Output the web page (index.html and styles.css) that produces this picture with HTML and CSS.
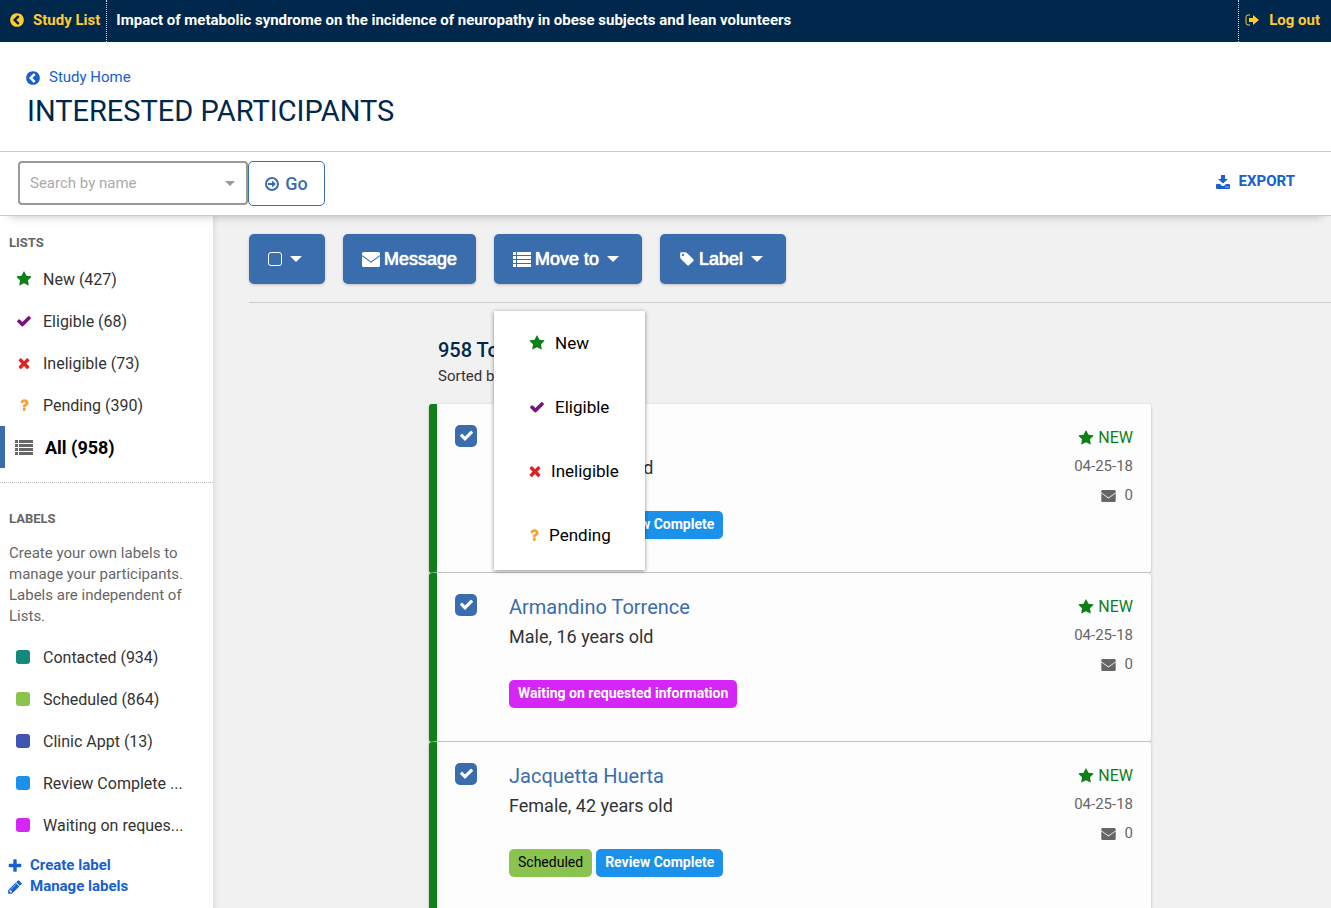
FILE: index.html
```html
<!DOCTYPE html>
<html lang="en">
<head>
<meta charset="utf-8">
<title>Interested Participants</title>
<link rel="stylesheet" href="styles.css">
</head>
<body>
<svg class="sprite" aria-hidden="true">
  <symbol id="star" viewBox="0 0 1792 1792"><path d="M1728 647q0 22-26 48l-363 354 86 500q1 7 1 20 0 21-10.5 35.5t-30.5 14.5q-19 0-40-12l-449-236-449 236q-22 12-40 12-21 0-31.5-14.5t-10.5-35.5q0-6 2-20l86-500-364-354q-25-27-25-48 0-37 56-46l502-73 225-455q19-41 49-41t49 41l225 455 502 73q56 9 56 46z"/></symbol>
  <symbol id="check" viewBox="0 0 1792 1792"><path d="M1671 566q0 40-28 68l-724 724-136 136q-28 28-68 28t-68-28l-136-136-362-362q-28-28-28-68t28-68l136-136q28-28 68-28t68 28l294 295 656-657q28-28 68-28t68 28l136 136q28 28 28 68z"/></symbol>
  <symbol id="times" viewBox="0 0 1792 1792"><path d="M1490 1322q0 40-28 68l-136 136q-28 28-68 28t-68-28l-294-294-294 294q-28 28-68 28t-68-28l-136-136q-28-28-28-68t28-68l294-294-294-294q-28-28-28-68t28-68l136-136q28-28 68-28t68 28l294 294 294-294q28-28 68-28t68 28l136 136q28 28 28 68t-28 68l-294 294 294 294q28 28 28 68z"/></symbol>
  <symbol id="question" viewBox="0 0 1792 1792"><path d="M1088 1256v240q0 16-12 28t-28 12h-240q-16 0-28-12t-12-28v-240q0-16 12-28t28-12h240q16 0 28 12t12 28zm316-600q0 54-15.5 101t-35 76.500-55 59.500-57.500 43.500-61 35.500q-41 23-68.500 65t-27.500 67q0 17-12 32.500t-28 15.500h-240q-15 0-25.500-18.500t-10.500-37.500v-45q0-83 65-156.500t143-108.500q59-27 84-56t25-76q0-42-46.500-74t-107.500-32q-65 0-108 29-35 25-107 115-13 16-31 16-12 0-25-8l-164-125q-13-10-15.500-25t5.500-28q160-266 464-266 80 0 161 31t146 83 106 127.500 41 158.500z"/></symbol>
  <symbol id="list" viewBox="0 0 18 15"><path d="M0 0h3v3H0zM4 0h14v3H4zM0 4h3v3H0zM4 4h14v3H4zM0 8h3v3H0zM4 8h14v3H4zM0 12h3v3H0zM4 12h14v3H4z"/></symbol>
  <symbol id="envelope" viewBox="0 0 18 15"><path d="M1.500 0h15Q18 0 18 1.500v1.500L9 9.500 0 3V1.500Q0 0 1.500 0zM0 4.200l9 6.500 9-6.500v9.300q0 1.500-1.500 1.500h-15Q0 15 0 13.500z"/></symbol>
  <symbol id="back" viewBox="0 0 1792 1792"><path d="M1037 1395l102-102q19-19 19-45t-19-45l-307-307 307-307q19-19 19-45t-19-45l-102-102q-19-19-45-19t-45 19l-454 454q-19 19-19 45t19 45l454 454q19 19 45 19t45-19zm627-499q0 209-103 385.500t-279.500 279.500-385.500 103-385.500-103-279.500-279.500-103-385.500 103-385.500 279.500-279.500 385.500-103 385.500 103 279.500 279.500 103 385.500z"/></symbol>
  <symbol id="plus" viewBox="0 0 1792 1792"><path d="M1600 736v192q0 40-28 68t-68 28h-416v416q0 40-28 68t-68 28h-192q-40 0-68-28t-28-68v-416h-416q-40 0-68-28t-28-68v-192q0-40 28-68t68-28h416v-416q0-40 28-68t68-28h192q40 0 68 28t28 68v416h416q40 0 68 28t28 68z"/></symbol>
  <symbol id="pencil" viewBox="0 0 1792 1792"><path d="M491 1536l91-91-235-235-91 91v107h128v128h107zm523-928q0-22-22-22-10 0-17 7l-542 542q-7 7-7 17 0 22 22 22 10 0 17-7l542-542q7-7 7-17zm-54-192l416 416-832 832h-416v-416zm683 96q0 53-37 90l-166 166-416-416 166-165q36-38 90-38 53 0 91 38l235 234q37 39 37 91z"/></symbol>
  <symbol id="tag" viewBox="0 0 1792 1792"><path d="M576 448q0-53-37.500-90.500t-90.500-37.500-90.500 37.500-37.500 90.500 37.500 90.500 90.500 37.500 90.500-37.500 37.500-90.500zm1067 576q0 53-37 90l-491 492q-39 37-91 37-53 0-90-37l-715-716q-38-37-64.500-101t-26.500-117v-416q0-52 38-90t90-38h416q53 0 117 26.500t102 64.500l715 714q37 39 37 91z"/></symbol>
  <symbol id="logout" viewBox="0 0 14 12"><path d="M5 1H3Q1 1 1 3v6q0 2 2 2h2" fill="none" stroke="currentColor" stroke-width="1"/><path d="M4 4H8V1l6 5-6 5V8H4z"/></symbol>
  <symbol id="export" viewBox="0 0 14 14"><path d="M5 0h4v4h3L7 8.500 2 4h3zM1 9h3l2 2h2l2-2H13q1 0 1 1v3q0 1-1 1H1q-1 0-1-1v-3q0-1 1-1z"/><path d="M9.500 12h1M11.500 12h1" stroke="#fff"/></symbol>
  <symbol id="go" viewBox="0 0 14 14"><circle cx="7" cy="7" r="6" fill="none" stroke="currentColor" stroke-width="2"/><path d="M3 6h4V3.500L11 7l-4 3.500V8H3z"/></symbol>
</svg>

<header class="topbar">
  <a class="topbar-link" href="#"><svg class="icon"><use href="#back"/></svg>Study List</a>
  <p class="study-name">Impact of metabolic syndrome on the incidence of neuropathy in obese subjects and lean volunteers</p>
  <a class="topbar-link logout" href="#"><svg class="icon-logout"><use href="#logout"/></svg>Log out</a>
</header>

<section class="heading">
  <a class="home-link" href="#"><svg class="icon"><use href="#back"/></svg>Study Home</a>
  <h1>INTERESTED PARTICIPANTS</h1>
</section>

<div class="searchbar">
  <form class="search">
    <div class="combo"><input type="text" placeholder="Search by name" aria-label="Search by name"><span class="caret"></span></div>
    <button class="go" type="button"><svg class="icon-go"><use href="#go"/></svg>Go</button>
  </form>
  <a class="export" href="#"><svg class="icon-go"><use href="#export"/></svg>EXPORT</a>
</div>

<div class="layout">
  <nav class="sidebar">
    <h2>LISTS</h2>
    <ul>
      <li><a href="#"><svg class="icon new"><use href="#star"/></svg>New (427)</a></li>
      <li><a href="#"><svg class="icon eligible"><use href="#check"/></svg>Eligible (68)</a></li>
      <li><a href="#"><svg class="icon ineligible"><use href="#times"/></svg>Ineligible (73)</a></li>
      <li><a href="#"><svg class="icon pending"><use href="#question"/></svg>Pending (390)</a></li>
      <li><a class="current" href="#"><svg class="icon-list"><use href="#list"/></svg>All (958)</a></li>
    </ul>
    <div class="labels">
      <h2>LABELS</h2>
      <p>Create your own labels to manage your participants. Labels are independent of Lists.</p>
      <ul>
        <li><a href="#"><span class="swatch teal"></span><span class="name">Contacted (934)</span></a></li>
        <li><a href="#"><span class="swatch green"></span><span class="name">Scheduled (864)</span></a></li>
        <li><a href="#"><span class="swatch indigo"></span><span class="name">Clinic Appt (13)</span></a></li>
        <li><a href="#"><span class="swatch blue"></span><span class="name">Review Complete ...</span></a></li>
        <li><a href="#"><span class="swatch magenta"></span><span class="name">Waiting on reques...</span></a></li>
      </ul>
      <a class="action" href="#"><svg class="icon"><use href="#plus"/></svg>Create label</a>
      <a class="action" href="#"><svg class="icon"><use href="#pencil"/></svg>Manage labels</a>
    </div>
  </nav>

  <main>
    <div class="toolbar">
      <button type="button" aria-label="Select"><span class="box"></span><span class="caret"></span></button>
      <button type="button"><svg class="icon-mail"><use href="#envelope"/></svg>Message</button>
      <div class="dropdown">
        <button type="button"><svg class="icon-list"><use href="#list"/></svg>Move to<span class="caret"></span></button>
        <div class="menu">
          <button type="button"><svg class="icon new"><use href="#star"/></svg>New</button>
          <button type="button"><svg class="icon eligible"><use href="#check"/></svg>Eligible</button>
          <button type="button"><svg class="icon-times ineligible" viewBox="2 0 12 16"><use href="#times" width="16" height="16"/></svg>Ineligible</button>
          <button type="button"><svg class="icon-question pending" viewBox="3 0 10 16"><use href="#question" width="16" height="16"/></svg>Pending</button>
        </div>
      </div>
      <button type="button"><svg class="icon-tag"><use href="#tag"/></svg>Label<span class="caret"></span></button>
    </div>

    <section class="results">
      <h2>958 Total</h2>
      <p class="sorted">Sorted by date</p>
      <article class="card">
        <label class="tick"><input type="checkbox" checked aria-label="Select participant"><svg><use href="#check"/></svg></label>
        <div class="person"><a href="#">Jamie Dale</a><p>Male, 16 years old</p>
          <div class="tags"><span class="tag green">Scheduled</span><span class="tag blue">Review Complete</span></div></div>
        <div class="meta"><strong><svg class="icon"><use href="#star"/></svg>NEW</strong><time>04-25-18</time><span class="mail"><svg><use href="#envelope"/></svg>0</span></div>
      </article>
      <article class="card">
        <label class="tick"><input type="checkbox" checked aria-label="Select Armandino Torrence"><svg><use href="#check"/></svg></label>
        <div class="person"><a href="#">Armandino Torrence</a><p>Male, 16 years old</p>
          <div class="tags"><span class="tag magenta">Waiting on requested information</span></div></div>
        <div class="meta"><strong><svg class="icon"><use href="#star"/></svg>NEW</strong><time>04-25-18</time><span class="mail"><svg><use href="#envelope"/></svg>0</span></div>
      </article>
      <article class="card">
        <label class="tick"><input type="checkbox" checked aria-label="Select Jacquetta Huerta"><svg><use href="#check"/></svg></label>
        <div class="person"><a href="#">Jacquetta Huerta</a><p>Female, 42 years old</p>
          <div class="tags"><span class="tag green">Scheduled</span><span class="tag blue">Review Complete</span></div></div>
        <div class="meta"><strong><svg class="icon"><use href="#star"/></svg>NEW</strong><time>04-25-18</time><span class="mail"><svg><use href="#envelope"/></svg>0</span></div>
      </article>
    </section>
  </main>
</div>
</body>
</html>
```
FILE: styles.css
```css
* { box-sizing: border-box; }
html, body { height: 100%; }
body {
  margin: 0;
  display: flex;
  flex-direction: column;
  overflow: hidden;
  font: 16px/21px Roboto, sans-serif;
  color: #333;
  background: #fff;
}
h1, h2, p, ul { margin: 0; padding: 0; }
ul { list-style: none; }
a { color: inherit; text-decoration: none; }
button, input { font: inherit; }
button { cursor: pointer; }
svg { fill: currentColor; flex: none; }
.sprite { position: absolute; width: 0; height: 0; }
.icon { width: 16px; height: 16px; }
.icon-times { width: 12px; height: 16px; }
.icon-question { width: 10px; height: 16px; }
.icon-logout { width: 14px; height: 12px; }
.icon-go { width: 14px; height: 14px; }
.icon-list { width: 18px; height: 15px; }
.icon-mail { width: 18px; height: 15px; }
.icon-tag { width: 16px; height: 16px; }
.new { color: #0f8017; }
.eligible { color: #7a127e; }
.ineligible { color: #e02020; }
.pending { color: #ff9d2b; }
.caret {
  border: 5px solid transparent;
  border-top-color: currentColor;
  border-bottom: 0;
}

.topbar {
  flex: none;
  display: flex;
  height: 42px;
  background: #00274c;
  color: #fff;
  font-size: 15px;
  font-weight: 700;
}
.topbar-link {
  display: flex;
  align-items: center;
  gap: 8px;
  padding: 0 6px 2px 9px;
  color: #ffcb2f;
}
.study-name { flex: 1; padding: 10px 9px; border-left: 1px dotted #ccd3da; }
.logout { gap: 10px; border-left: 1px dotted #ccd3da; padding: 0 11px 2px 6px; }

.heading { flex: none; padding: 25px 27px 20px; border-bottom: 1px solid #ccc; }
.home-link { display: flex; align-items: center; gap: 8px; margin-left: -2px; font-size: 15px; color: #1660d0; }
.heading h1 { padding-top: 3px; font-size: 29px; line-height: 40px; font-weight: 400; color: #00274c; }

.searchbar {
  flex: none;
  position: relative;
  display: flex;
  justify-content: space-between;
  align-items: flex-start;
  padding: 9px 36px 9px 18px;
  border-bottom: 1px solid #ccc;
  background: #fff;
  box-shadow: 0 9px 9px -9px rgba(0, 0, 0, .25);
  z-index: 1;
}
.search { display: flex; }
.combo {
  display: flex;
  align-items: center;
  width: 230px;
  height: 44px;
  padding: 0 11px 0 10px;
  border: 2px solid #999;
  border-radius: 4px;
  color: #999;
}
.combo input { flex: 1; min-width: 0; padding: 0; border: 0; outline: 0; background: none; font-size: 15px; }
.combo input::placeholder { color: #aaa; }
.go {
  display: flex;
  align-items: center;
  justify-content: center;
  gap: 6px;
  width: 77px;
  height: 45px;
  border: 1px solid #3a6dae;
  border-radius: 5px;
  background: #fff;
  color: #3a6dae;
  font-size: 18px;
  font-weight: 500;
}
.export { display: flex; align-items: center; gap: 9px; padding-top: 10px; color: #1660d0; font-size: 15px; font-weight: 700; }

.layout { flex: 1; display: flex; min-height: 0; }
.sidebar { flex: none; width: 213px; padding-top: 16px; }
.sidebar h2 { padding: 0 9px; font-size: 13px; font-weight: 700; color: #666; }
.sidebar li a {
  display: flex;
  align-items: center;
  gap: 11px;
  height: 42px;
  padding: 0 24px 0 16px;
}
.sidebar li a.current { gap: 12px; }
.sidebar h2 + ul { margin-top: 5px; }
.sidebar li .current {
  padding-left: 10px;
  border-left: 5px solid #3a6dae;
  font-size: 18px;
  font-weight: 700;
  color: #000;
}
.current .icon-list { color: #666; }
.labels { margin-top: 14px; padding-top: 25px; border-top: 1px dotted #bbb; }
.labels p { padding: 14px 9px 9px; color: #666; font-size: 15px; }
.labels li .swatch { margin-right: 2px; }
.swatch { flex: none; width: 14px; height: 14px; border-radius: 3px; }
.name { white-space: nowrap; }
.teal { background: #12897b; }
.green { background: #8bc34f; }
.indigo { background: #4054b2; }
.blue { background: #1a91eb; }
.magenta { background: #d526f7; }
.action { display: flex; align-items: center; gap: 7px; padding-left: 7px; color: #1660d0; font-size: 15px; font-weight: 700; }
.labels ul + .action { margin-top: 9px; }

main { flex: 1; min-width: 0; padding: 18px 0 0 36px; background: #f1f1f1; box-shadow: inset 4px 0 5px -2px rgba(0, 0, 0, .09); }
.toolbar { display: flex; gap: 18px; padding-bottom: 18px; border-bottom: 1px solid #ccc; }
.toolbar > button, .dropdown > button {
  display: flex;
  align-items: center;
  gap: 4px;
  height: 50px;
  padding: 0 19px;
  border: 0;
  border-radius: 5px;
  background: #3a6dae;
  color: #fff;
  font-family: "Liberation Sans", Arial, sans-serif;
  font-size: 18px;
  text-shadow: 0 0 1px #fff, 0 0 1px #fff;
  box-shadow: 0 1px 3px rgba(0, 0, 0, .2);
}
.toolbar .caret { margin: 0 4px; border-width: 6px 6px 0; }
.box { width: 14px; height: 14px; border: 1px solid #fff; border-radius: 3px; }
.dropdown { position: relative; }
.menu {
  position: absolute;
  top: 77px;
  left: 0;
  z-index: 2;
  width: 151px;
  padding-bottom: 3px;
  background: #fff;
  box-shadow: 0 1px 4px rgba(0, 0, 0, .45);
}
.menu button {
  display: flex;
  align-items: center;
  gap: 10px;
  width: 100%;
  height: 64px;
  padding: 0 0 0 35px;
  border: 0;
  background: none;
  font-size: 17px;
  color: #000;
}

.results { width: 722px; max-width: 100%; margin: 35px 0 0 180px; }
.results h2 { padding-left: 9px; font-size: 20px; line-height: 24px; font-weight: 500; color: #00274c; }
.sorted { padding: 4px 9px 17px; font-size: 15px; }
.card {
  display: flex;
  height: 169px;
  padding: 21px 18px 0;
  border-left: 8px solid #0f8017;
  border-bottom: 1px solid #ccc;
  border-radius: 3px;
  background: #fdfdfd;
  box-shadow: 0 1px 3px rgba(0, 0, 0, .25);
}
.tick { position: relative; width: 22px; height: 22px; }
.tick input { appearance: none; display: block; width: 22px; height: 22px; margin: 0; border-radius: 5px; background: #3a6dae; }
.tick svg { position: absolute; top: 3px; left: 4px; width: 15px; height: 15px; fill: #fff; pointer-events: none; }
.person { flex: 1; padding-left: 32px; }
.person a { display: block; font-size: 20px; line-height: 26px; color: #3a6dae; }
.person p { padding-top: 6px; font-size: 18px; line-height: 22px; }
.tags { display: flex; gap: 4px; padding-top: 32px; }
.tag { height: 28px; padding: 0 9px; border-radius: 5px; font-size: 14px; line-height: 26px; font-weight: 700; color: #fff; }
.tag.green { color: #000; font-weight: 400; }
.meta { display: flex; flex-direction: column; align-items: flex-end; gap: 8px; padding-top: 2px; color: #666; font-size: 15px; }
.meta strong { display: flex; align-items: center; gap: 4px; font-size: 16px; font-weight: 400; color: #0f8017; }
.mail { display: flex; align-items: center; gap: 9px; }
.mail svg { width: 15px; height: 12px; }
```
